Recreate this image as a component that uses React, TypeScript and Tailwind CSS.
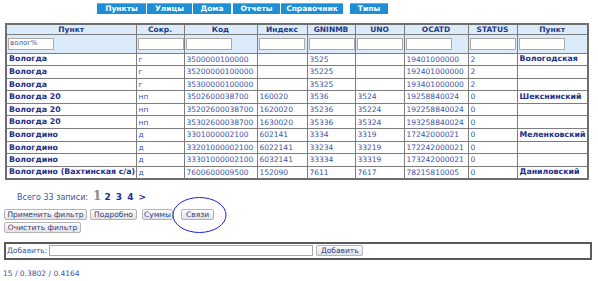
import React from 'react'

const NAV = [
  { label: 'Пункты', w: 'w-[49px]', ml: 'ml-0' },
  { label: 'Улицы', w: 'w-[45px]', ml: 'ml-[1px]' },
  { label: 'Дома', w: 'w-[38px]', ml: 'ml-[1px]' },
  { label: 'Отчеты', w: 'w-[47px]', ml: 'ml-[2px]' },
  { label: 'Справочник', w: 'w-[62px]', ml: 'ml-[1px]' },
  { label: 'Типы', w: 'w-[38px]', ml: 'ml-[7px]' },
]

const HEAD = ['Пункт', 'Сокр.', 'Код', 'Индекс', 'GNINMB', 'UNO', 'OCATD', 'STATUS', 'Пункт']

type Row = [string, string, string, string, string, string, string, string, string]

const ROWS: Row[] = [
  ['Вологда', 'г', '3500000100000', '', '3525', '', '19401000000', '2', 'Вологодская'],
  ['Вологда', 'г', '35200000100000', '', '35225', '', '192401000000', '2', ''],
  ['Вологда', 'г', '35300000100000', '', '35325', '', '193401000000', '2', ''],
  ['Вологда 20', 'нп', '3502600038700', '160020', '3536', '3524', '19258840024', '0', 'Шекснинский'],
  ['Вологда 20', 'нп', '35202600038700', '1620020', '35236', '35224', '192258840024', '0', ''],
  ['Вологда 20', 'нп', '35302600038700', '1630020', '35336', '35324', '193258840024', '0', ''],
  ['Вологдино', 'д', '3301000002100', '602141', '3334', '3319', '17242000021', '0', 'Меленковский'],
  ['Вологдино', 'д', '33201000002100', '6022141', '33234', '33219', '172242000021', '0', ''],
  ['Вологдино', 'д', '33301000002100', '6032141', '33334', '33319', '173242000021', '0', ''],
  ['Вологдино (Вахтинская с/а)', 'д', '7600600009500', '152090', '7611', '7617', '78215810005', '0', 'Даниловский'],
]

const COLS = ['w-[130px]', 'w-[48px]', 'w-[73px]', 'w-[50px]', 'w-[48px]', 'w-[49px]', 'w-[64px]', 'w-[49px]', 'w-[71px]']

function GrayButton({ label, w }: { label: string; w: string }) {
  return (
    <button
      className={`${w} h-[11px] flex items-center justify-center rounded-[2px] border border-[#b4b4b4] bg-gradient-to-b from-[#fdfdfd] to-[#e2e2e2] text-[7.5px] leading-none text-[#2d3f7c]`}
    >
      {label}
    </button>
  )
}

export default function App() {
  return (
    <div className="relative w-[598px] h-[281px] bg-white font-['DejaVu_Sans',sans-serif] text-[7.5px] leading-none overflow-hidden">
      {/* top menu */}
      <div className="flex pl-[97px] pt-[3px]">
        {NAV.map((n) => (
          <div
            key={n.label}
            className={`${n.w} ${n.ml} h-[11px] flex items-center justify-center bg-[#1d8fd6] border-t border-[#5fb3e6] text-white font-bold text-[7.5px]`}
          >
            {n.label}
          </div>
        ))}
      </div>

      {/* data table */}
      <div className="pl-[5px] pt-[9px]">
        <table className="table-fixed border-collapse w-[582px] border-2 border-[#6e6e6e]">
          <colgroup>
            {COLS.map((c, i) => (
              <col key={i} className={c} />
            ))}
          </colgroup>
          <thead>
            <tr className="h-[10px] bg-[#dbebf9]">
              {HEAD.map((h, i) => (
                <th key={i} className="border border-[#7d7d7d] p-0 text-center font-bold text-[#1f3a8c]">
                  {h}
                </th>
              ))}
            </tr>
            <tr className="h-[19px] bg-[#dbebf9]">
              {HEAD.map((_, i) => (
                <td key={i} className="border border-[#7d7d7d] px-[1px] py-0 overflow-hidden">
                  <div className="w-[46px] h-[12px] bg-white border border-[#a9a9a9] px-[1px] flex items-center text-[7px] text-[#3a55a6]">
                    {i === 0 ? 'волог%' : ''}
                  </div>
                </td>
              ))}
            </tr>
          </thead>
          <tbody>
            {ROWS.map((r, ri) => (
              <tr key={ri} className="h-[12.6px]">
                {r.map((v, ci) => (
                  <td
                    key={ci}
                    className={`border border-[#7d7d7d] px-[2px] py-0 whitespace-nowrap overflow-hidden ${
                      ci === 0 || ci === 8 ? 'font-bold text-[7.8px] text-[#1c2f88]' : 'text-[#3a55a6]'
                    }`}
                  >
                    {v}
                  </td>
                ))}
              </tr>
            ))}
          </tbody>
        </table>
      </div>

      {/* pagination */}
      <div className="flex items-baseline pl-[17px] mt-[10px] h-[12px] text-[8px] text-[#3a55a6]">
        <span>Всего 33 записи:</span>
        <span className="ml-[5px] font-['DejaVu_Serif',serif] font-bold text-[12px] text-[#8b8b8b]">1</span>
        <span className="ml-[3px] font-bold text-[9px] text-[#1c2f88] tracking-[1px]">2 3 4 &gt;</span>
      </div>

      {/* filter buttons */}
      <div className="pl-[4px] mt-[7px] flex flex-col gap-[2px]">
        <div className="flex">
          <GrayButton label="Применить фильтр" w="w-[83px]" />
          <div className="ml-[3px]">
            <GrayButton label="Подробно" w="w-[47px]" />
          </div>
          <div className="ml-[5px]">
            <GrayButton label="Суммы" w="w-[31px]" />
          </div>
          <div className="ml-[8px]">
            <GrayButton label="Связи" w="w-[33px]" />
          </div>
        </div>
        <GrayButton label="Очистить фильтр" w="w-[77px]" />
      </div>

      {/* hand-drawn marker around Связи */}
      <svg className="absolute left-[172px] top-[196px]" width="55" height="38" viewBox="0 0 55 38">
        <ellipse cx="27.5" cy="19" rx="26.5" ry="17.5" fill="none" stroke="#1426d0" strokeWidth="1" />
      </svg>

      {/* add row */}
      <div className="ml-[4px] mt-[9px] w-[588px] h-[18px] border-2 border-[#5a5a5a] flex items-center px-[1px]">
        <span className="text-[7.5px] text-[#3a55a6]">Добавить:</span>
        <div className="ml-[2px] w-[264px] h-[11px] bg-white border border-[#a9a9a9]" />
        <div className="ml-[3px]">
          <GrayButton label="Добавить" w="w-[47px]" />
        </div>
      </div>

      {/* stats */}
      <div className="pl-[3px] mt-[10px] text-[7.5px] text-[#3a55a6]">15 / 0.3802 / 0.4164</div>
    </div>
  )
}
